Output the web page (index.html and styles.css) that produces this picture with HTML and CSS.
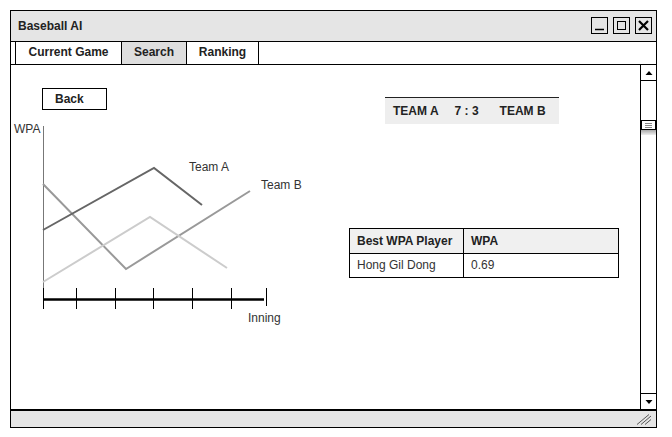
FILE: index.html
```html
<!DOCTYPE html>
<html>
<head>
<meta charset="utf-8">
<link rel="stylesheet" href="styles.css">
</head>
<body>
<div class="window">
  <div class="titlebar">
    <span class="title">Baseball AI</span>
    <div class="winbtns">
      <span class="winbtn"><svg width="15" height="15" viewBox="0 0 15 15"><line x1="3" y1="11.5" x2="12" y2="11.5" stroke="#000" stroke-width="1.5"/></svg></span>
      <span class="winbtn"><svg width="15" height="15" viewBox="0 0 15 15"><rect x="3.5" y="3.5" width="8" height="8" fill="none" stroke="#000" stroke-width="1"/></svg></span>
      <span class="winbtn"><svg width="15" height="15" viewBox="0 0 15 15"><path d="M3 3 L12 12 M12 3 L3 12" stroke="#000" stroke-width="2.2"/></svg></span>
    </div>
  </div>
  <div class="tabs">
    <div class="tab tab-first">Current Game</div>
    <div class="tab tab-active tab-search">Search</div>
    <div class="tab tab-ranking">Ranking</div>
  </div>
  <div class="content">
    <div class="main">
      <div class="leftcol">
        <div class="backbtn">Back</div>
        <svg class="chart" width="300" height="212" viewBox="0 0 300 212">
          <text x="3" y="14" class="axislabel">WPA</text>
          <line x1="32.5" y1="7" x2="32.5" y2="169" stroke="#777" stroke-width="1"/>
          <polyline points="32,65 115,150 239,72" fill="none" stroke="#999" stroke-width="2"/>
          <polyline points="32,163 139,98 216,149" fill="none" stroke="#ccc" stroke-width="2"/>
          <polyline points="32,111 143,49 191,86" fill="none" stroke="#666" stroke-width="2"/>
          <line x1="32" y1="180.5" x2="253" y2="180.5" stroke="#000" stroke-width="2.5"/>
          <g stroke="#000" stroke-width="1">
            <line x1="32.5" y1="169" x2="32.5" y2="190"/>
            <line x1="65.5" y1="169" x2="65.5" y2="190"/>
            <line x1="104.5" y1="169" x2="104.5" y2="190"/>
            <line x1="142.5" y1="169" x2="142.5" y2="190"/>
            <line x1="181.5" y1="169" x2="181.5" y2="190"/>
            <line x1="220.5" y1="169" x2="220.5" y2="190"/>
            <line x1="255.5" y1="169" x2="255.5" y2="187"/>
          </g>
          <text x="178" y="52" class="axislabel">Team A</text>
          <text x="250" y="70" class="axislabel">Team B</text>
          <text x="237" y="203" class="axislabel">Inning</text>
        </svg>
      </div>
      <div class="rightcol">
        <div class="score">
          <span class="team">TEAM A</span>
          <span class="result">7 : 3</span>
          <span class="team">TEAM B</span>
        </div>
        <table class="wpatable">
          <tr class="head"><td class="c1">Best WPA Player</td><td>WPA</td></tr>
          <tr><td class="c1">Hong Gil Dong</td><td>0.69</td></tr>
        </table>
      </div>
    </div>
    <div class="scrollbar">
      <div class="sbtn sbtn-up"><svg width="8" height="6" viewBox="0 0 8 6"><path d="M0.5 5 L4 1 L7.5 5 Z" fill="#000"/></svg></div>
      <div class="track">
        <div class="thumb"><span></span><span></span><span></span></div>
        <div class="thumbshadow"></div>
      </div>
      <div class="sbtn sbtn-down"><svg width="8" height="6" viewBox="0 0 8 6"><path d="M0.5 1 L4 5 L7.5 1 Z" fill="#000"/></svg></div>
    </div>
  </div>
  <div class="statusbar">
    <svg class="grip" width="16" height="12" viewBox="0 0 16 12">
      <g stroke="#555" stroke-width="1">
        <line x1="1" y1="11.5" x2="13" y2="1.5"/>
        <line x1="5" y1="11.5" x2="15" y2="3"/>
        <line x1="9" y1="11.5" x2="15" y2="6.5"/>
      </g>
    </svg>
  </div>
</div>
</body>
</html>
```
FILE: styles.css
```css
* { box-sizing: border-box; }
html, body { margin: 0; padding: 0; background: #fff; }
body {
  font-family: "Liberation Sans", Arial, sans-serif;
  font-size: 12px;
  color: #222;
}
.window {
  margin: 10px 0 0 10px;
  width: 647px;
  height: 418px;
  border: 1px solid #000;
  display: flex;
  flex-direction: column;
}
.titlebar {
  height: 31px;
  flex: none;
  background: #e5e5e5;
  border-bottom: 1px solid #000;
  display: flex;
  align-items: center;
  padding-left: 7px;
  padding-right: 4px;
}
.title { font-weight: bold; color: #222; flex: 1; padding-bottom: 1px; }
.winbtns { display: flex; gap: 5px; padding-bottom: 1px; }
.winbtn {
  width: 17px; height: 17px;
  border: 1px solid #000;
  display: flex; align-items: center; justify-content: center;
  background: #e5e5e5;
}
.tabs {
  height: 23px;
  flex: none;
  border-bottom: 1px solid #000;
  display: flex;
  padding-left: 4px;
}
.tab {
  border-right: 1px solid #000;
  font-weight: bold;
  display: flex; align-items: center; justify-content: center;
  color: #222;
  padding-bottom: 2px;
}
.tab-first { border-left: 1px solid #000; width: 107px; }
.tab-search { width: 65px; }
.tab-ranking { width: 72px; }
.tab-active { background: #dedede; }
.content {
  height: 344px;
  flex: none;
  display: flex;
}
.main { flex: 1; display: flex; }
.leftcol { width: 300px; padding-top: 23px; }
.backbtn {
  margin-left: 31px;
  width: 65px; height: 22px;
  border: 1px solid #000;
  font-weight: bold;
  padding-left: 12px;
  padding-bottom: 1px;
  display: flex; align-items: center;
  color: #222;
}
.chart { display: block; margin-top: 9px; }
.axislabel { font-family: "Liberation Sans", Arial, sans-serif; font-size: 12px; fill: #333; }
.rightcol { flex: 1; padding-top: 32px; }
.score {
  margin-left: 74px;
  width: 174px; height: 27px;
  background: #eeeeee;
  border-top: 1px solid #222;
  display: flex; align-items: center;
  padding-left: 8px;
  font-weight: bold;
  color: #222;
}
.result { margin-left: 16px; margin-right: 21px; }
.wpatable {
  margin-left: 38px;
  margin-top: 104px;
  width: 270px;
  border-collapse: collapse;
  border: 1px solid #000;
}
.wpatable td {
  border: 1px solid #000;
  height: 24.5px;
  padding: 0 0 0 7px;
  color: #333;
}
.wpatable .c1 { width: 114px; }
.wpatable .head td { background: #f0f0f0; font-weight: bold; color: #222; }
.scrollbar {
  width: 16px;
  border-left: 1px solid #000;
  display: flex; flex-direction: column;
}
.sbtn { height: 16px; display: flex; align-items: center; justify-content: center; flex: none; }
.sbtn-up { border-bottom: 1px solid #000; }
.sbtn-down { border-top: 1px solid #000; }
.track { flex: 1; padding-top: 39px; }
.thumb {
  height: 10px;
  border: 1px solid #000;
  display: flex; flex-direction: column; align-items: center; justify-content: center; gap: 1px;
  background: #fff;
}
.thumb span { display: block; width: 7px; height: 1px; background: #888; }
.thumbshadow { height: 5px; background: linear-gradient(#aaa, #eee); }
.statusbar {
  flex: 1;
  background: #e5e5e5;
  border-top: 2px solid #000;
  display: flex; justify-content: flex-end; align-items: center;
  padding-right: 4px;
}
.grip { display: block; }
```
